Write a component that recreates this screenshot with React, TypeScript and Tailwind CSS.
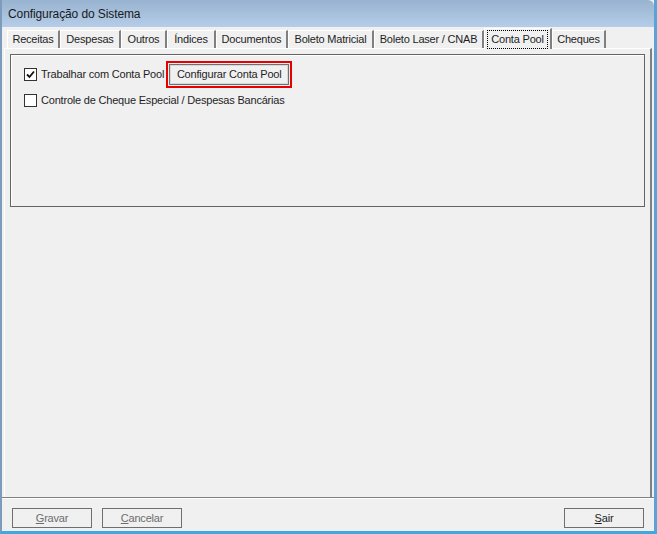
import React from "react";

const tabs = [
  { label: "Receitas", w: 53 },
  { label: "Despesas", w: 61 },
  { label: "Outros", w: 46 },
  { label: "Índices", w: 49 },
  { label: "Documentos", w: 72 },
  { label: "Boleto Matricial", w: 86 },
  { label: "Boleto Laser / CNAB", w: 110 },
  { label: "Conta Pool", w: 68, active: true },
  { label: "Cheques", w: 54 },
];

const txt = "text-[11px] tracking-[-0.2px] whitespace-nowrap";

function Btn({ children, disabled, className = "" }: { children: React.ReactNode; disabled?: boolean; className?: string }) {
  return (
    <div
      className={`h-[20px] w-[80px] flex items-center justify-center border border-[#6f6f6f] bg-[#f0f0f0] ${txt} ${disabled ? "text-[#6d6d6d]" : "text-[#1e1e1e]"} ${className}`}
    >
      {children}
    </div>
  );
}

export default function App() {
  return (
    <div
      className="w-[657px] h-[534px] bg-[#f0f0f0] flex flex-col relative overflow-hidden border-l-[2px] border-l-[#7d9cbc] border-r-[3px] border-r-[#5ba3d6] border-b-[3px] border-b-[#40a8e0]"
      style={{ fontFamily: '"Liberation Sans", Arial, sans-serif' }}
    >
      {/* Title bar */}
      <div className="h-[27px] shrink-0 bg-gradient-to-b from-[#98b3d0] to-[#b5cde8] flex items-center pl-[6px] text-[12px] tracking-[-0.1px] text-[#1a1a1a] rounded-tr-[6px]">
        Configuração do Sistema
      </div>

      {/* Tab strip */}
      <div className="flex items-end h-[21px] pl-[5px] shrink-0">
        {tabs.map((t) =>
          t.active ? (
            <div
              key={t.label}
              style={{ width: t.w }}
              className={`h-[21px] -mb-[1px] relative z-10 bg-[#f0f0f0] border-l border-t border-white border-r-[2px] border-r-[#808080] flex items-center justify-center text-[#1e1e1e] ${txt}`}
            >
              <span className="border border-dotted border-black px-[3px] leading-[17px]">{t.label}</span>
            </div>
          ) : (
            <div
              key={t.label}
              style={{ width: t.w }}
              className={`h-[18px] border-l border-t border-white border-r-[2px] border-r-[#808080] flex items-center justify-center text-[#1e1e1e] ${txt}`}
            >
              {t.label}
            </div>
          )
        )}
      </div>

      {/* Tab page */}
      <div className="flex-1 mx-[2px] border-t border-l border-white border-r-[2px] border-r-[#808080] flex flex-col pt-[5px] px-[5px]">
        <div className="h-[153px] border border-[#646464] shadow-[inset_1px_1px_0_#ffffff] flex flex-col pt-[5px] pl-[13px]">
          <div className="flex items-center h-[29px]">
            <div className="w-[13px] h-[13px] border border-[#333] bg-white flex items-center justify-center">
              <svg width="9" height="9" viewBox="0 0 9 9">
                <path d="M1 4.5 L3.5 7 L8 1.5" stroke="#111" strokeWidth="1.8" fill="none" />
              </svg>
            </div>
            <span className={`ml-[4px] text-[#1e1e1e] ${txt}`}>Trabalhar com Conta Pool</span>
            <div className="ml-[2px] border-[2px] border-[#e80000] p-[1px]">
              <div className={`h-[21px] w-[120px] flex items-center justify-center border border-[#707070] shadow-[inset_0_0_0_1px_#d8d8d8] text-[#1e1e1e] ${txt}`}>
                Configurar Conta Pool
              </div>
            </div>
          </div>
          <div className="flex items-center h-[16px] mt-[3px]">
            <div className="w-[13px] h-[13px] border border-[#333] bg-white" />
            <span className={`ml-[4px] text-[#1e1e1e] ${txt}`}>Controle de Cheque Especial / Despesas Bancárias</span>
          </div>
        </div>
      </div>

      {/* Bottom bar */}
      <div className="h-[34px] shrink-0 border-t border-t-[#808080] shadow-[inset_0_1px_0_#ffffff] flex items-start pt-[10px] px-[10px]">
        <Btn disabled><span><span className="underline">G</span>ravar</span></Btn>
        <Btn disabled className="ml-[10px]"><span><span className="underline">C</span>ancelar</span></Btn>
        <div className="flex-1" />
        <Btn><span><span className="underline">S</span>air</span></Btn>
      </div>
    </div>
  );
}
